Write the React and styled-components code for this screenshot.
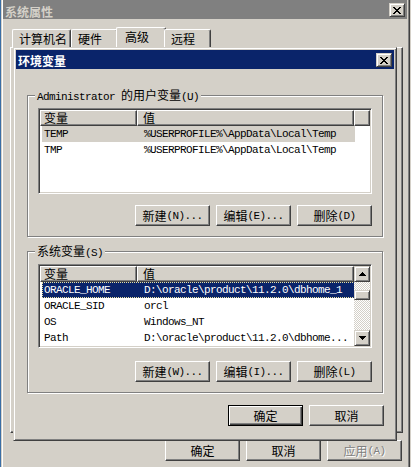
import React from 'react'
import styled, { createGlobalStyle, css } from 'styled-components'

const face = '#d4d0c8'
const shadow = '#808080'
const dark = '#404040'
const navy = '#0a246a'

const GlobalStyle = createGlobalStyle`
  html, body {
    margin: 0;
    padding: 0;
  }
  body {
    font-family: "Noto Sans CJK SC", "Liberation Sans", sans-serif;
    font-size: 12px;
    color: #000;
    background: ${face};
  }
`

// window frame / scroll buttons
const frame = css`
  border: 1px solid;
  border-color: ${face} ${dark} ${dark} ${face};
  box-shadow: inset 1px 1px #fff, inset -1px -1px ${shadow};
`

// push buttons, tabs
const raised = css`
  border: 1px solid;
  border-color: #fff ${dark} ${dark} #fff;
  box-shadow: inset -1px -1px ${shadow};
`

const sunken = css`
  border: 1px solid;
  border-color: ${shadow} #fff #fff ${shadow};
  box-shadow: inset 1px 1px ${dark}, inset -1px -1px ${face};
`

const Lat = styled.span`
  font-family: "Liberation Mono", "DejaVu Sans Mono", monospace;
  font-size: 11px;
  letter-spacing: -0.6px;
`

const Mixed = ({ text }) =>
  text
    .split(/([\x00-\xff]+)/)
    .filter(Boolean)
    .map((part, i) =>
      /^[\x00-\xff]+$/.test(part) ? <Lat key={i}>{part}</Lat> : <span key={i}>{part}</span>
    )

const Desk = styled.div`
  position: relative;
  width: 411px;
  height: 467px;
  overflow: hidden;
  box-sizing: border-box;
  border-left: 1px solid #3a6ea5;
  background: ${face};
`

const Window = styled.div`
  ${frame};
  width: 409px;
  height: 490px;
  margin-top: -2px;
  box-sizing: border-box;
  padding: 1px 2px 2px 1px;
  background: ${face};
  display: flex;
  flex-direction: column;
`

const TitleBar = styled.div`
  height: 19px;
  flex: none;
  display: flex;
  align-items: center;
  justify-content: space-between;
  padding-left: 2px;
  background: ${(p) => (p.$active ? navy : shadow)};
  color: ${(p) => (p.$active ? '#fff' : face)};
  font-weight: 700;
  font-size: 12px;
`

const TitleText = styled.span`
  line-height: 19px;
  padding-top: ${(p) => (p.$low ? '3px' : '1px')};
`

const CloseBtn = styled.div`
  ${frame};
  width: 16px;
  height: 14px;
  box-sizing: border-box;
  margin-right: 2px;
  margin-top: 1px;
  background: ${face};
  display: flex;
  align-items: center;
  justify-content: center;
`

const XGlyph = () => (
  <svg width="8" height="7" viewBox="0 0 8 7" shapeRendering="crispEdges">
    <path
      fill="#000"
      d="M0 0h2v1H0zM6 0h2v1H6zM1 1h2v1H1zM5 1h2v1H5zM2 2h4v1H2zM3 3h2v1H3zM2 4h4v1H2zM1 5h2v1H1zM5 5h2v1H5zM0 6h2v1H0zM6 6h2v1H6z"
    />
  </svg>
)

const Tabs = styled.div`
  display: flex;
  align-items: flex-end;
  height: 20px;
  margin: 8px 0 0 9px;
`

const Tab = styled.div`
  border-top: 1px solid #fff;
  border-left: 1px solid #fff;
  border-right: 1px solid ${dark};
  box-shadow: inset -1px 0 ${shadow};
  border-radius: 2px 2px 0 0;
  box-sizing: border-box;
  width: ${(p) => p.$w}px;
  height: ${(p) => (p.$on ? 20 : 18)}px;
  margin: ${(p) => (p.$on ? '0 -2px' : '0')};
  padding: ${(p) => (p.$on ? '1px 0 0 8px' : '1px 0 0 6px')};
  line-height: 16px;
  background: ${face};
`

const TabPage = styled.div`
  ${raised};
  height: 386px;
  margin: 0 4px 0 7px;
  box-sizing: border-box;
`

const FootRow = styled.div`
  display: flex;
  justify-content: flex-end;
  gap: 6px;
  padding-right: ${(p) => p.$pr}px;
  margin-top: ${(p) => p.$mt}px;
`

const Button = styled.div`
  ${raised};
  width: 75px;
  height: 21px;
  box-sizing: border-box;
  display: flex;
  align-items: center;
  justify-content: center;
  background: ${face};
  line-height: 14px;
  ${(p) =>
    p.$default &&
    css`
      border: 1px solid #000;
      box-shadow: inset 1px 1px #fff, inset -1px -1px ${dark}, inset -2px -2px ${shadow};
    `}
  ${(p) =>
    p.$disabled &&
    css`
      color: ${shadow};
      text-shadow: 1px 1px #fff;
    `}
`

const Dialog = styled.div`
  ${frame};
  position: absolute;
  left: 12px;
  top: 47px;
  width: 384px;
  height: 394px;
  box-sizing: border-box;
  padding: 2px;
  background: ${face};
  display: flex;
  flex-direction: column;
`

const DialogBody = styled.div`
  padding: 0 11px;
  display: flex;
  flex-direction: column;
`

const Group = styled.div`
  border: 1px solid ${shadow};
  box-shadow: inset 1px 1px #fff, 1px 1px #fff;
  margin-top: ${(p) => p.$mt}px;
  padding: 0 10px 10px;
  display: flex;
  flex-direction: column;
`

const Legend = styled.div`
  align-self: flex-start;
  margin: -8px 0 0 -3px;
  padding: 0 2px;
  height: 14px;
  line-height: 14px;
  background: ${face};
`

const List = styled.div`
  ${sunken};
  height: ${(p) => p.$h}px;
  margin-top: 6px;
  box-sizing: border-box;
  padding: 1px;
  background: #fff;
  display: flex;
`

const ListMain = styled.div`
  flex: 1;
  display: flex;
  flex-direction: column;
  min-width: 0;
`

const Header = styled.div`
  display: flex;
  height: 16px;
  flex: none;
`

const HeadCell = styled.div`
  ${raised};
  width: ${(p) => (p.$w ? `${p.$w}px` : 'auto')};
  flex: ${(p) => (p.$w ? 'none' : '1')};
  box-sizing: border-box;
  background: ${face};
  padding-left: ${(p) => p.$pl || 0}px;
  line-height: 14px;
  font-size: 12px;
`

const Row = styled.div`
  display: flex;
  align-items: center;
  height: 16px;
  width: 313px;
  margin-left: 2px;
  box-sizing: border-box;
  background: ${(p) => (p.$sel === 'focus' ? navy : p.$sel === 'dim' ? face : 'transparent')};
  color: ${(p) => (p.$sel === 'focus' ? '#fff' : '#000')};
  outline: ${(p) => (p.$sel === 'focus' ? '1px dotted #e8e0a0' : 'none')};
  outline-offset: -1px;
  font-family: "Liberation Mono", "DejaVu Sans Mono", monospace;
  font-size: 11px;
  letter-spacing: -0.6px;
  white-space: nowrap;
`

const Cell = styled.div`
  width: ${(p) => (p.$w ? `${p.$w}px` : 'auto')};
  flex: ${(p) => (p.$w ? 'none' : '1')};
  padding-left: ${(p) => p.$pl}px;
  box-sizing: border-box;
  overflow: hidden;
`

const ScrollBar = styled.div`
  width: 16px;
  flex: none;
  display: flex;
  flex-direction: column;
`

const ScrollBtn = styled.div`
  ${frame};
  width: 16px;
  height: ${(p) => p.$h || 16}px;
  box-sizing: border-box;
  background: ${face};
  display: flex;
  align-items: center;
  justify-content: center;
`

const Track = styled.div`
  height: ${(p) => (p.$h ? `${p.$h}px` : 'auto')};
  flex: ${(p) => (p.$h ? 'none' : '1')};
  background: repeating-conic-gradient(#fff 0 25%, ${face} 0 50%) 0 0 / 2px 2px;
`

const Arrow = ({ down }) => (
  <svg
    width="7"
    height="4"
    viewBox="0 0 7 4"
    shapeRendering="crispEdges"
    style={down ? { transform: 'rotate(180deg)' } : undefined}
  >
    <path fill="#000" d="M3 0h1v1H3zM2 1h3v1H2zM1 2h5v1H1zM0 3h7v1H0z" />
  </svg>
)

const userVars = [
  ['TEMP', '%USERPROFILE%\\AppData\\Local\\Temp', 'dim'],
  ['TMP', '%USERPROFILE%\\AppData\\Local\\Temp'],
]

const sysVars = [
  ['ORACLE_HOME', 'D:\\oracle\\product\\11.2.0\\dbhome_1', 'focus'],
  ['ORACLE_SID', 'orcl'],
  ['OS', 'Windows_NT'],
  ['Path', 'D:\\oracle\\product\\11.2.0\\dbhome...'],
]

const VarList = ({ rows, height, scroll }) => (
  <List $h={height}>
    <ListMain>
      <Header>
        <HeadCell $w={97} $pl={3}>变量</HeadCell>
        <HeadCell $w={217} $pl={5}>值</HeadCell>
        {!scroll && <HeadCell />}
      </Header>
      {rows.map(([name, value, sel]) => (
        <Row key={name} $sel={sel}>
          <Cell $w={95} $pl={2}>{name}</Cell>
          <Cell $pl={7}>{value}</Cell>
        </Row>
      ))}
    </ListMain>
    {scroll && (
      <ScrollBar>
        <ScrollBtn>
          <Arrow />
        </ScrollBtn>
        <Track $h={8} />
        <ScrollBtn $h={10} />
        <Track />
        <ScrollBtn>
          <Arrow down />
        </ScrollBtn>
      </ScrollBar>
    )}
  </List>
)

const VarGroup = ({ title, mt, rows, height, gap, scroll, buttons }) => (
  <Group $mt={mt}>
    <Legend>
      <Mixed text={title} />
    </Legend>
    <VarList rows={rows} height={height} scroll={scroll} />
    <FootRow $mt={gap} $pr={0}>
      {buttons.map((b) => (
        <Button key={b}>
          <Mixed text={b} />
        </Button>
      ))}
    </FootRow>
  </Group>
)

export default function App() {
  return (
    <>
      <GlobalStyle />
      <Desk>
        <Window>
          <TitleBar>
            <TitleText $low>系统属性</TitleText>
            <CloseBtn>
              <XGlyph />
            </CloseBtn>
          </TitleBar>
          <Tabs>
            <Tab $w={59}>计算机名</Tab>
            <Tab $w={47}>硬件</Tab>
            <Tab $w={50} $on>高级</Tab>
            <Tab $w={47}>远程</Tab>
          </Tabs>
          <TabPage />
          <FootRow $mt={7} $pr={5}>
            <Button>确定</Button>
            <Button>取消</Button>
            <Button $disabled>
              <Mixed text="应用(A)" />
            </Button>
          </FootRow>
        </Window>

        <Dialog>
          <TitleBar $active>
            <TitleText>环境变量</TitleText>
            <CloseBtn>
              <XGlyph />
            </CloseBtn>
          </TitleBar>
          <DialogBody>
            <VarGroup
              title="Administrator 的用户变量(U)"
              mt={26}
              rows={userVars}
              height={86}
              gap={11}
              buttons={['新建(N)...', '编辑(E)...', '删除(D)']}
            />
            <VarGroup
              title="系统变量(S)"
              mt={14}
              rows={sysVars}
              height={84}
              gap={13}
              scroll
              buttons={['新建(W)...', '编辑(I)...', '删除(L)']}
            />
          </DialogBody>
          <FootRow $mt={12} $pr={10}>
            <Button $default>确定</Button>
            <Button>取消</Button>
          </FootRow>
        </Dialog>
      </Desk>
    </>
  )
}
